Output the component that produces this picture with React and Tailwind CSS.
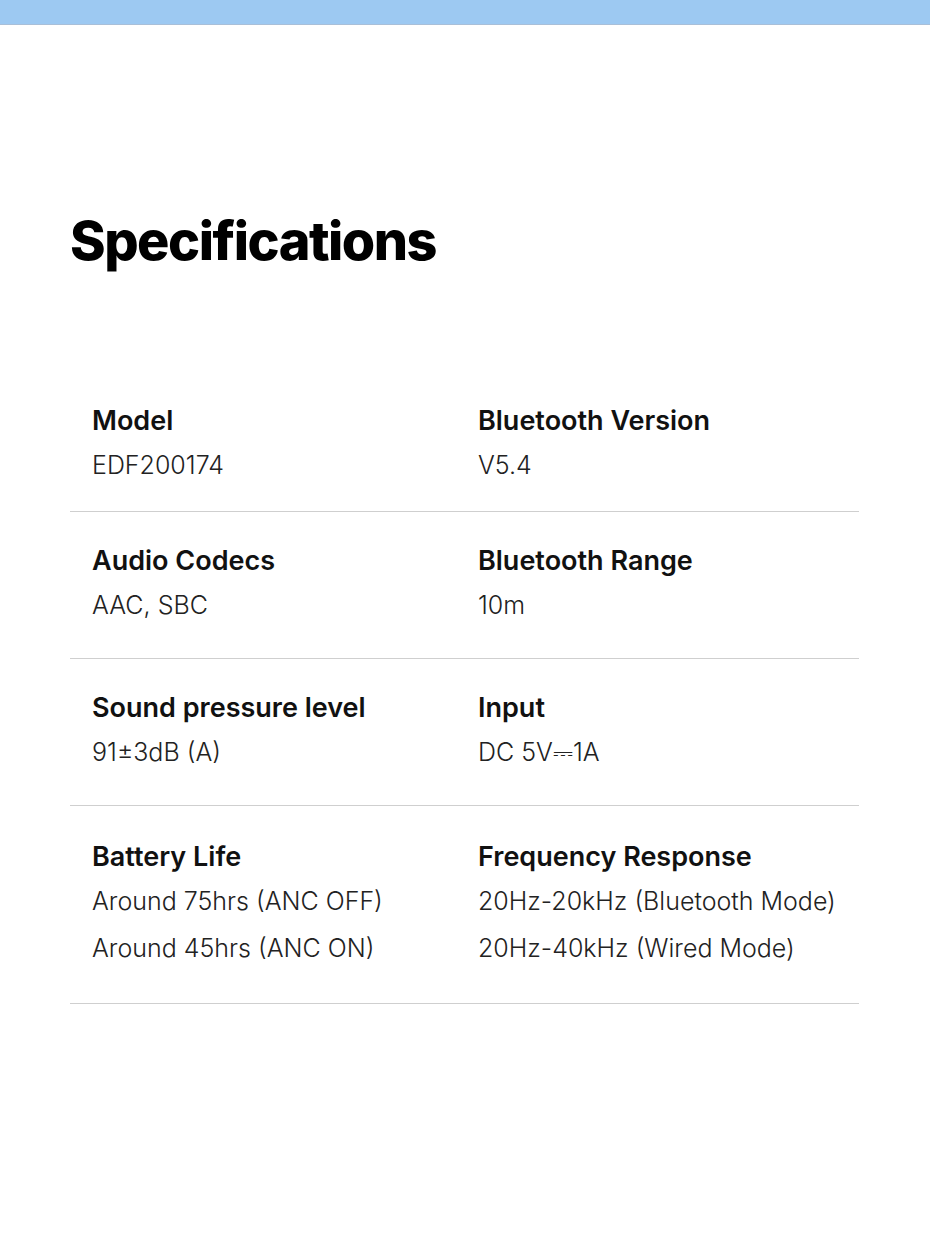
import React from 'react';

const rows = [
    [
        { label: 'Model', values: ['EDF200174'] },
        { label: 'Bluetooth Version', values: ['V5.4'] },
    ],
    [
        { label: 'Audio Codecs', values: ['AAC, SBC'] },
        { label: 'Bluetooth Range', values: ['10m'] },
    ],
    [
        { label: 'Sound pressure level', values: ['91±3dB (A)'] },
        { label: 'Input', values: ['DC 5V⎓1A'] },
    ],
    [
        { label: 'Battery Life', values: ['Around 75hrs (ANC OFF)', 'Around 45hrs (ANC ON)'] },
        { label: 'Frequency Response', values: ['20Hz-20kHz (Bluetooth Mode)', '20Hz-40kHz (Wired Mode)'] },
    ],
];

// row padding differs a little per row in the original artwork
const rowPad = ['pt-[32px] pb-[29px]', 'pt-[32px] pb-[36px]', 'pt-[32px] pb-[36px]', 'pt-[34px] pb-[38px]'];

function Cell({ label, values }) {
    return (
        <div>
            <div className="text-[27px] font-semibold text-[#111] leading-[34px]">{label}</div>
            <div className="mt-[10px] flex flex-col gap-[13px]">
                {values.map(v => (
                    <div key={v} className="text-[25px] text-[#222] leading-[34px] font-light">{v}</div>
                ))}
            </div>
        </div>
    );
}

export default function App() {
    return (
        <div className="w-[930px] h-[1242px] bg-white" style={{ fontFamily: 'Inter, "Noto Sans", sans-serif' }}>
            <div className="h-[25px] bg-[#9dc9f2] border-b border-[#a9bfd8]" />
            <div className="px-[70px]">
                <h1 className="pt-[180px] text-[54px] font-extrabold leading-[72px] tracking-[-1.5px] text-black">Specifications</h1>
                <div className="mt-[95px] w-[789px]">
                    {rows.map((row, i) => (
                        <div key={i} className={`grid grid-cols-[386px_1fr] pl-[22px] border-b border-[#cfcfcf] ${rowPad[i]}`}>
                            {row.map(c => <Cell key={c.label} {...c} />)}
                        </div>
                    ))}
                </div>
            </div>
        </div>
    );
}
